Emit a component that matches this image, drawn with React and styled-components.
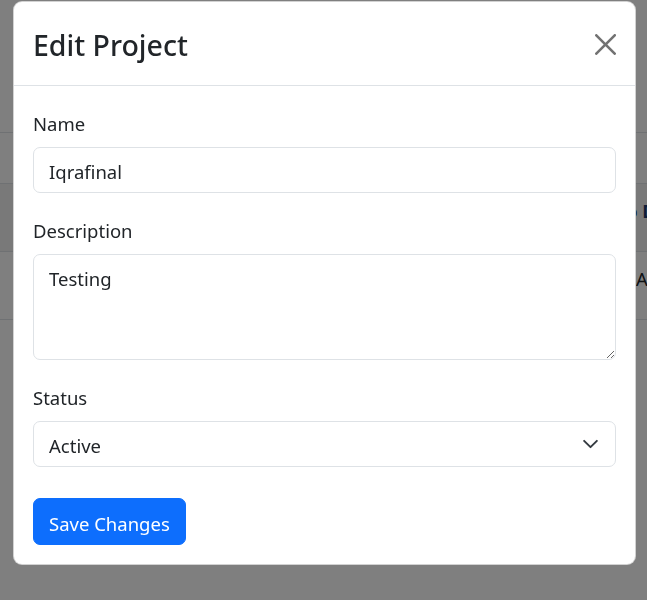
import React from "react";
import styled, { createGlobalStyle } from "styled-components";

const FONT = `"Noto Sans", "Open Sans", "Liberation Sans", sans-serif`;

const GlobalStyle = createGlobalStyle`
  *, *::before, *::after { box-sizing: border-box; }
  html, body { margin: 0; padding: 0; }
  body {
    font-family: ${FONT};
    font-size: 18.5px;
    color: #212529;
    background: #ffffff;
    overflow: hidden;
  }
`;

/* ---------- background page ---------- */
const Page = styled.div`
  width: 647px;
  height: 600px;
`;

const PageTop = styled.div`
  height: 133px;
  border-bottom: 1px solid #dee2e6;
`;

const TableRow = styled.div`
  display: grid;
  grid-template-columns: ${(p) => p.$lead}px 1fr;
  height: ${(p) => p.$h}px;
  padding-top: ${(p) => p.$pt}px;
  border-bottom: 1px solid #dee2e6;
  background: ${(p) => (p.$striped ? "rgba(0,0,0,0.05)" : "transparent")};
  line-height: 29px;
  white-space: nowrap;
  overflow: hidden;
`;

const Cell = styled.span`
  font-weight: ${(p) => (p.$bold ? 700 : 400)};
  color: ${(p) => p.$color || "#212529"};
`;

/* ---------- modal ---------- */
const Backdrop = styled.div`
  position: fixed;
  inset: 0;
  background: rgba(0, 0, 0, 0.5);
`;

const ModalLayer = styled.div`
  position: fixed;
  inset: 0;
  display: flex;
  align-items: flex-start;
  padding: 1px 0 0 13px;
`;

const Modal = styled.div`
  width: 623px;
  background: #fff;
  border: 1px solid rgba(0, 0, 0, 0.175);
  border-radius: 9px;
  display: flex;
  flex-direction: column;
`;

const Header = styled.div`
  display: flex;
  align-items: center;
  justify-content: space-between;
  padding: 21px 19px 18px 19px;
  border-bottom: 1px solid #dee2e6;
`;

const Title = styled.h5`
  margin: 0;
  font-size: 28.5px;
  line-height: 44px;
  font-weight: 500;
  color: #212529;
`;

const CloseButton = styled.button`
  width: 29px;
  height: 29px;
  padding: 0;
  margin-right: -4px;
  margin-top: -2px;
  border: 0;
  background: transparent;
  display: flex;
  align-items: center;
  justify-content: center;
  opacity: 0.55;
  cursor: pointer;
`;

const Body = styled.div`
  padding: 20px 19px 19px 19px;
  display: flex;
  flex-direction: column;
`;

const Field = styled.div`
  display: flex;
  flex-direction: column;
  margin-bottom: ${(p) => p.$mb ?? 20}px;
`;

const Label = styled.label`
  font-size: 18.5px;
  line-height: 29px;
  padding-top: 3px;
  margin-bottom: 9px;
  color: #212529;
`;

const controlBase = `
  width: 100%;
  font-family: ${FONT};
  font-size: 18.5px;
  line-height: 29px;
  color: #212529;
  background: #fff;
  border: 1px solid #dee2e6;
  border-radius: 7px;
  outline: none;
  margin: 0;
`;

const Input = styled.input`
  ${controlBase}
  height: 46px;
  padding: 3px 15px 0 15px;
`;

const TextArea = styled.textarea`
  ${controlBase}
  height: 106px;
  padding: 9px 15px 7px 15px;
  resize: vertical;
  display: block;
`;

const SelectWrap = styled.div`
  position: relative;
`;

const Select = styled.select`
  ${controlBase}
  height: 46px;
  padding: 3px 50px 0 15px;
  appearance: none;
  -webkit-appearance: none;
  display: block;
`;

const Chevron = styled.svg`
  position: absolute;
  right: 17px;
  top: 50%;
  transform: translateY(-50%);
  pointer-events: none;
`;

const PrimaryButton = styled.button`
  align-self: flex-start;
  height: 47px;
  padding: 3px 15px 0 15px;
  font-family: ${FONT};
  font-size: 18.5px;
  line-height: 29px;
  color: #fff;
  background: #0d6efd;
  border: 1px solid #0d6efd;
  border-radius: 7px;
  cursor: pointer;
`;

export default function App() {
  return (
    <>
      <GlobalStyle />
      <Page>
        <PageTop />
        <TableRow $lead={634} $h={51} $pt={10} />
        <TableRow $lead={626} $h={68} $pt={12} $striped>
          <span />
          <Cell $bold $color="#1d3a72">o D</Cell>
        </TableRow>
        <TableRow $lead={636} $h={68} $pt={12}>
          <span />
          <Cell>A</Cell>
        </TableRow>
      </Page>
      <Backdrop />
      <ModalLayer>
        <Modal role="dialog" aria-label="Edit Project">
          <Header>
            <Title>Edit Project</Title>
            <CloseButton aria-label="Close">
              <svg width="21" height="21" viewBox="0 0 16 16" fill="#000">
                <path d="M.293.293a1 1 0 0 1 1.414 0L8 6.586 14.293.293a1 1 0 1 1 1.414 1.414L9.414 8l6.293 6.293a1 1 0 0 1-1.414 1.414L8 9.414l-6.293 6.293a1 1 0 0 1-1.414-1.414L6.586 8 .293 1.707a1 1 0 0 1 0-1.414z" />
              </svg>
            </CloseButton>
          </Header>
          <Body>
            <Field>
              <Label htmlFor="name">Name</Label>
              <Input id="name" defaultValue="Iqrafinal" />
            </Field>
            <Field>
              <Label htmlFor="desc">Description</Label>
              <TextArea id="desc" defaultValue="Testing" />
            </Field>
            <Field $mb={31}>
              <Label htmlFor="status">Status</Label>
              <SelectWrap>
                <Select id="status" defaultValue="Active">
                  <option>Active</option>
                  <option>Inactive</option>
                  <option>Completed</option>
                </Select>
                <Chevron width="17" height="13" viewBox="0 0 16 12" fill="none">
                  <path d="m2 3 6 6 6-6" stroke="#343a40" strokeWidth="1.8" strokeLinecap="round" strokeLinejoin="round" />
                </Chevron>
              </SelectWrap>
            </Field>
            <PrimaryButton type="button">Save Changes</PrimaryButton>
          </Body>
        </Modal>
      </ModalLayer>
    </>
  );
}
